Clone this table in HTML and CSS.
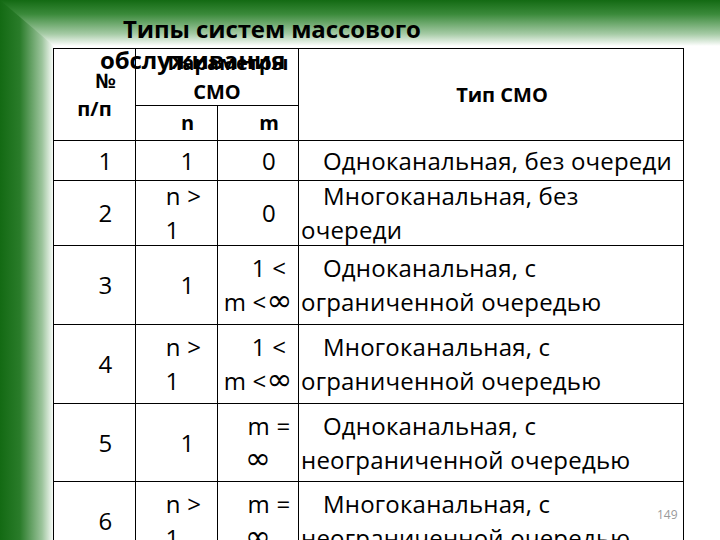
FILE: index.html
```html
<!DOCTYPE html>
<html lang="ru">
<head>
<meta charset="utf-8">
<link rel="stylesheet" href="styles.css">
</head>
<body>
<div class="slide">
  <div class="content">
    <h1 class="title">Типы систем массового обслуживания</h1>
    <div class="grid">
      <div class="cell head num"><p>№<br>п/п</p></div>
      <div class="cell head params"><p>Параметры<br>СМО</p></div>
      <div class="cell head type"><p>Тип СМО</p></div>
      <div class="cell head"><p>n</p></div>
      <div class="cell head"><p>m</p></div>

      <div class="cell"><p>1</p></div>
      <div class="cell"><p>1</p></div>
      <div class="cell"><p>0</p></div>
      <div class="cell text"><p>Одноканальная, без очереди</p></div>

      <div class="cell"><p>2</p></div>
      <div class="cell col2"><p>n &gt;<br>1</p></div>
      <div class="cell"><p>0</p></div>
      <div class="cell text"><p>Многоканальная, без<br>очереди</p></div>

      <div class="cell"><p>3</p></div>
      <div class="cell"><p>1</p></div>
      <div class="cell"><p>1 &lt;<br>m &lt;<span class="inf">∞</span></p></div>
      <div class="cell text"><p>Одноканальная, с<br>ограниченной очередью</p></div>

      <div class="cell"><p>4</p></div>
      <div class="cell col2"><p>n &gt;<br>1</p></div>
      <div class="cell"><p>1 &lt;<br>m &lt;<span class="inf">∞</span></p></div>
      <div class="cell text"><p>Многоканальная, с<br>ограниченной очередью</p></div>

      <div class="cell"><p>5</p></div>
      <div class="cell"><p>1</p></div>
      <div class="cell"><p>m =<br><span class="inf">∞</span></p></div>
      <div class="cell text"><p>Одноканальная, с<br>неограниченной очередью</p></div>

      <div class="cell"><p>6</p></div>
      <div class="cell col2"><p>n &gt;<br>1</p></div>
      <div class="cell"><p>m =<br><span class="inf">∞</span></p></div>
      <div class="cell text"><p>Многоканальная, с<br>неограниченной очередью</p></div>
    </div>
  </div>
  <div class="page-num">149</div>
</div>
</body>
</html>
```
FILE: styles.css
```css
html, body {
  margin: 0;
  padding: 0;
}
body {
  width: 720px;
  height: 540px;
  overflow: hidden;
  background: #ffffff;
  font-family: "Open Sans", "Noto Sans", sans-serif;
  color: #000;
}
.slide {
  position: relative;
  width: 720px;
  height: 540px;
  overflow: hidden;
  background: linear-gradient(to right, #136a13 0px, #2a7c2a 20px, #9cc49c 42px, #ffffff 54px) left top / 54px 100% no-repeat, #ffffff;
}
.slide::before {
  content: "";
  position: absolute;
  left: 0;
  top: 0;
  width: 720px;
  height: 46px;
  background: linear-gradient(to bottom, #136a13 0px, #3a8a3a 14px, #a6cba6 34px, #ffffff 46px);
  clip-path: polygon(0 0, 100% 0, 100% 100%, 54px 100%);
}
.content {
  position: relative;
  padding-left: 53px;
  padding-top: 13px;
}
.title {
  position: relative;
  z-index: 2;
  margin: 0 0 0 47px;
  width: 360px;
  font-size: 24px;
  line-height: 31px;
  font-weight: 700;
  text-indent: 23px;
  text-align: left;
  letter-spacing: -0.1px;
}
.grid {
  margin-top: -27px;
  display: grid;
  grid-template-columns: 82px 82px 81px 385px;
  grid-template-rows: 57px 35px 40px 65px 79px 79px 78px 79px;
  border-left: 1px solid #000;
  border-top: 1px solid #000;
  width: 630px;
}
.cell {
  border-right: 1px solid #000;
  border-bottom: 1px solid #000;
  display: flex;
  flex-direction: column;
  justify-content: center;
  padding: 0 4px;
  font-size: 24px;
  line-height: 34px;
  white-space: nowrap;
  letter-spacing: 0.2px;
}
.cell p {
  margin: 0;
  text-align: center;
  text-indent: 22px;
}
.cell.col2 {
  padding: 0 8px 0 0;
}
.cell.text {
  padding: 0 2px;
}
.cell.text p {
  text-align: left;
}
.inf {
  font-family: "DejaVu Sans", sans-serif;
  font-size: 31px;
  line-height: 0;
  letter-spacing: 0;
}
.cell.head {
  font-size: 20px;
  font-weight: 700;
  line-height: 28px;
  letter-spacing: 0;
}
.num {
  grid-row: 1 / span 2;
}
.params {
  grid-column: 2 / span 2;
  line-height: 29px !important;
}
.type {
  grid-column: 4;
  grid-row: 1 / span 2;
}
.page-num {
  position: absolute;
  left: 657px;
  top: 507px;
  font-size: 12px;
  line-height: 16px;
  color: #9a9a9a;
  font-family: "Open Sans", "Noto Sans", sans-serif;
}
```
